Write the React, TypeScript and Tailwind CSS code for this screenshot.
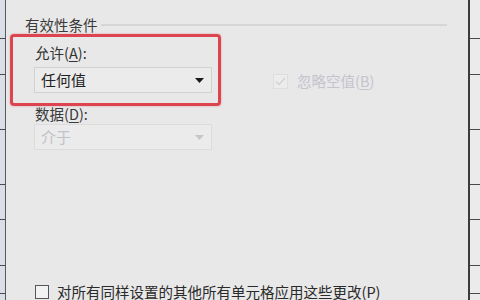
import React from "react";

const ROWS = [39, 36, 55, 55, 35, 46, 28, 30];

const FONT = { fontFamily: '"Noto Sans CJK SC", "Noto Sans", sans-serif' };

function SheetEdge({ className }: { className: string }) {
  return (
    <div className={`flex flex-col shrink-0 ${className}`}>
      {ROWS.map((h, i) => (
        <div key={i} className="shrink-0 border-b-[1.5px] border-[#4a4a4a]" style={{ height: h }} />
      ))}
    </div>
  );
}

function Caret({ color }: { color: string }) {
  return (
    <svg width="9" height="5" viewBox="0 0 9 5" className="shrink-0">
      <path d="M0 0 H9 L4.5 5 Z" fill={color} />
    </svg>
  );
}

export default function App() {
  return (
    <div className="w-[480px] h-[300px] overflow-hidden flex bg-[#e8e8e8] text-[#2b2b2b]" style={FONT}>
      {/* spreadsheet behind, left */}
      <SheetEdge className="w-[6px] bg-[#dadee6] border-r-[1.5px] border-[#5a5a5a]" />

      {/* dialog body */}
      <div className="flex-1 flex flex-col">
        {/* group header */}
        <div className="flex items-center mt-[17px] pl-[19px] mr-[21px] h-[16px]">
          <span className="text-[14.5px] leading-[16px] text-[#3a3a3a]">有效性条件</span>
          <div className="flex-1 ml-[3px] h-[2px] bg-[#d6d6d6]" />
        </div>

        <div className="flex mt-[1px]">
          <div className="flex flex-col">
            {/* highlighted allow box */}
            <div className="ml-[4px] w-[211px] border-[3px] border-[#dc4450] rounded-[4px] pt-[8px] pb-[10px] pl-[21px] pr-[6px] shadow-[0_0_2px_rgba(220,68,80,0.5)]">
              <div className="text-[14.5px] leading-[16px] pl-[1px] text-[#333]">
                允许(<span className="underline underline-offset-2">A</span>):
              </div>
              <div className="mt-[6px] w-[178px] h-[26px] flex items-center justify-between pl-[6px] pr-[7px] bg-[#ebebeb] border border-[#d2d2d2]">
                <span className="text-[15px] leading-[18px] text-[#222]">任何值</span>
                <Caret color="#1a1a1a" />
              </div>
            </div>

            {/* data (disabled) */}
            <div className="ml-[29px] text-[14.5px] leading-[16px] text-[#3a3a3a]">
              数据(<span className="underline underline-offset-2">D</span>):
            </div>
            <div className="ml-[28px] mt-[2px] w-[178px] h-[26px] flex items-center justify-between pl-[6px] pr-[7px] bg-[#ebebeb] border border-[#dcdcdc]">
              <span className="text-[15px] leading-[18px] text-[#c2c2ca]">介于</span>
              <Caret color="#c6c6cc" />
            </div>
          </div>

          {/* ignore blank (disabled) */}
          <div className="ml-[52px] pt-[39px]">
            <div className="flex items-center">
              <div className="w-[15px] h-[15px] border border-[#dedede] bg-[#ececec] flex items-center justify-center">
                <svg width="11" height="9" viewBox="0 0 11 9">
                  <path d="M1 4.5 L4 7.5 L10 1" stroke="#d2d2d6" strokeWidth="1.3" fill="none" />
                </svg>
              </div>
              <span className="ml-[9px] text-[14.5px] leading-[16px] text-[#c4c4ce]">
                忽略空值(<span className="underline underline-offset-2">B</span>)
              </span>
            </div>
          </div>
        </div>

        {/* apply to all */}
        <div className="flex items-center ml-[29px] mt-[134px]">
          <div className="w-[14px] h-[14px] border border-[#555] bg-[#f2f2f2] shrink-0" />
          <span className="ml-[8px] text-[14.5px] leading-[16px] whitespace-nowrap text-[#2a2a2a]">
            对所有同样设置的其他所有单元格应用这些更改(<span className="underline underline-offset-2">P</span>)
          </span>
        </div>
      </div>

      {/* spreadsheet behind, right */}
      <SheetEdge className="w-[12px] bg-[#ebebeb] border-l-2 border-[#3c3c3c]" />
    </div>
  );
}
